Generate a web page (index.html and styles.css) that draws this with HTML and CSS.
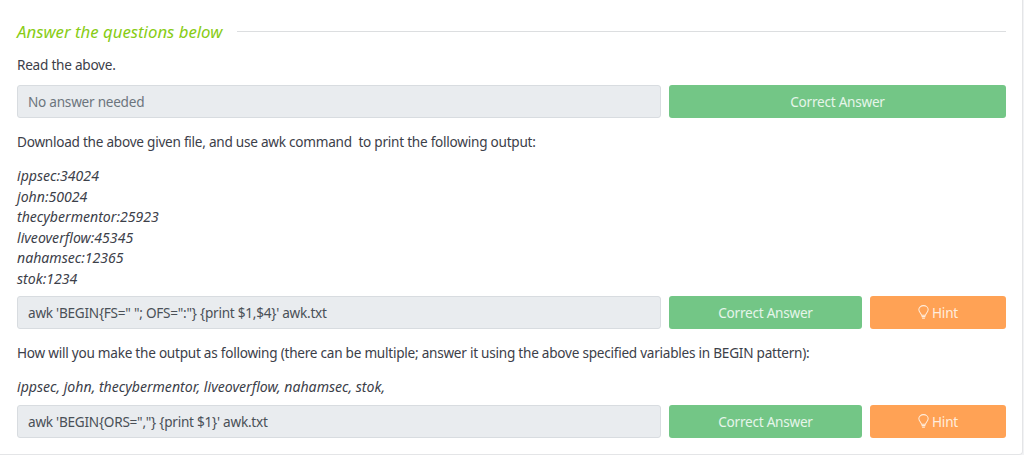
FILE: index.html
```html
<!DOCTYPE html>
<html lang="en">
<head>
    <meta charset="UTF-8">
    <meta name="viewport" content="width=device-width, initial-scale=1.0">
    <title>Answer the questions below</title>
    <link rel="stylesheet" href="styles.css">
</head>
<body>
    <div class="card">
        <div class="heading">
            <span class="heading-text">Answer the questions below</span>
            <span class="heading-rule"></span>
        </div>

        <p class="question">Read the above.</p>
        <div class="answer-row">
            <div class="answer-input placeholder">No answer needed</div>
            <button class="btn btn-correct">Correct Answer</button>
        </div>

        <p class="question">Download the above given file, and use awk command &nbsp;to print the following output:</p>
        <p class="sample">ippsec:34024<br>john:50024<br>thecybermentor:25923<br>liveoverflow:45345<br>nahamsec:12365<br>stok:1234</p>
        <div class="answer-row">
            <div class="answer-input">awk 'BEGIN{FS=" "; OFS=":"} {print $1,$4}' awk.txt</div>
            <button class="btn btn-correct btn-small">Correct Answer</button>
            <button class="btn btn-hint">
                <svg class="bulb" viewBox="0 0 12 16" fill="none" stroke="currentColor" stroke-width="1.1">
                    <path d="M3.8 11c0-2-2.9-3.300-2.900-6.200a5.100 4.300 0 0 1 10.200 0c0 2.900-2.900 4.200-2.900 6.200z"/>
                    <path d="M3.900 12.500h4.200M4.500 14.300h3"/>
                </svg>
                Hint
            </button>
        </div>

        <p class="question">How will you make the output as following (there can be multiple; answer it using the above specified variables in BEGIN pattern):</p>
        <p class="sample sample-single">ippsec, john, thecybermentor, liveoverflow, nahamsec, stok,</p>
        <div class="answer-row">
            <div class="answer-input">awk 'BEGIN{ORS=","} {print $1}' awk.txt</div>
            <button class="btn btn-correct btn-small">Correct Answer</button>
            <button class="btn btn-hint">
                <svg class="bulb" viewBox="0 0 12 16" fill="none" stroke="currentColor" stroke-width="1.1">
                    <path d="M3.8 11c0-2-2.9-3.300-2.900-6.200a5.100 4.300 0 0 1 10.200 0c0 2.900-2.900 4.200-2.900 6.200z"/>
                    <path d="M3.900 12.500h4.200M4.500 14.300h3"/>
                </svg>
                Hint
            </button>
        </div>
    </div>
</body>
</html>
```

FILE: styles.css
```css
body {
    margin: 0;
    background-color: #f2f3f5;
    font-family: "Noto Sans", "Open Sans", sans-serif;
    font-size: 13.6px;
    letter-spacing: -0.25px;
    color: #3c4049;
}
.card {
    box-sizing: border-box;
    width: 1023px;
    height: 455px;
    padding: 19px 16px 0 17px;
    background-color: #fff;
    border-right: 1px solid #e4e5e7;
    border-bottom: 1px solid #e4e5e7;
    border-bottom-right-radius: 4px;
}
.heading {
    display: flex;
    align-items: center;
    gap: 15px;
    height: 24px;
    margin-bottom: 12px;
}
.heading-text {
    font-size: 16.8px;
    font-style: italic;
    letter-spacing: 0;
    color: #88cc14;
}
.heading-rule {
    flex: 1;
    height: 1px;
    background-color: #dcdee0;
}
.question {
    margin: 0 0 9px 0;
    line-height: 20px;
    height: 21px;
}
.sample {
    margin: 13px 0 6px 0;
    line-height: 20.6px;
    font-size: 14.1px;
    font-style: italic;
    letter-spacing: 0;
}
.sample-single {
    margin-bottom: 8px;
}
.answer-row {
    display: flex;
    gap: 8px;
    height: 33px;
    margin-bottom: 14px;
}
.answer-input {
    box-sizing: border-box;
    flex: none;
    width: 644px;
    padding: 0 10px;
    line-height: 31px;
    background-color: #e9ecef;
    border: 1px solid #d8dce0;
    border-radius: 3px;
    color: #495057;
}
.placeholder {
    color: #6c757d;
}
.btn {
    display: flex;
    align-items: center;
    justify-content: center;
    border: 0;
    border-radius: 3px;
    font-family: inherit;
    font-size: 13.6px;
    letter-spacing: inherit;
}
.btn-correct {
    flex: 1;
    background-color: #73c686;
    color: #e6f5ea;
}
.btn-small {
    flex: none;
    width: 193px;
}
.btn-hint {
    width: 136px;
    background-color: #ffa255;
    color: #ffeddd;
    gap: 3px;
}
.bulb {
    width: 11px;
    height: 15px;
}
```
